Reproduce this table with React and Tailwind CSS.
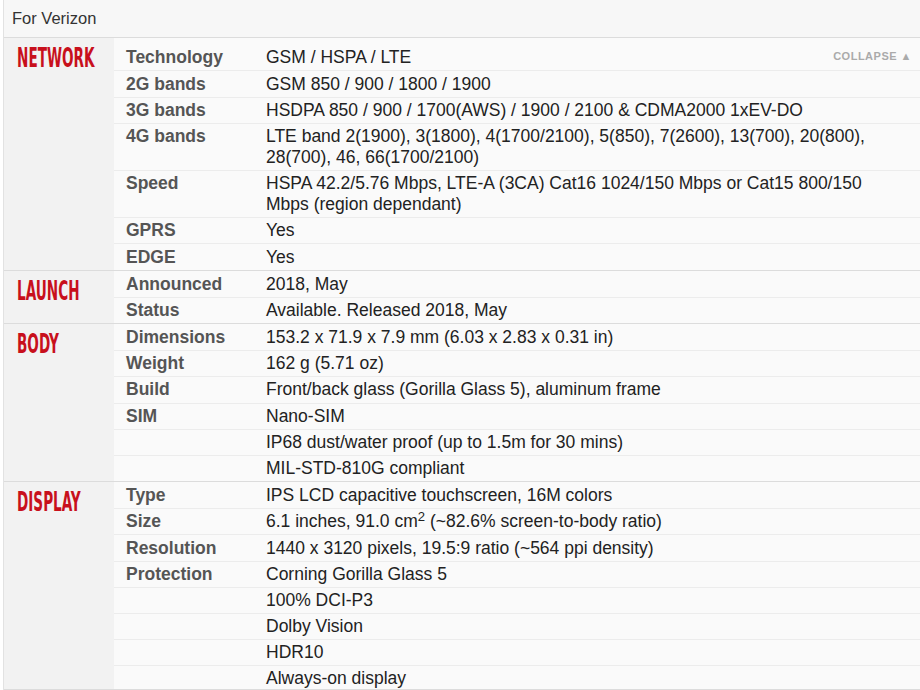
const sections = [
  {
    title: "NETWORK",
    rows: [
      { label: "Technology", value: "GSM / HSPA / LTE", collapse: true },
      { label: "2G bands", value: "GSM 850 / 900 / 1800 / 1900" },
      { label: "3G bands", value: "HSDPA 850 / 900 / 1700(AWS) / 1900 / 2100 & CDMA2000 1xEV-DO" },
      {
        label: "4G bands",
        value:
          "LTE band 2(1900), 3(1800), 4(1700/2100), 5(850), 7(2600), 13(700), 20(800), 28(700), 46, 66(1700/2100)",
      },
      {
        label: "Speed",
        value: "HSPA 42.2/5.76 Mbps, LTE-A (3CA) Cat16 1024/150 Mbps or Cat15 800/150 Mbps (region dependant)",
      },
      { label: "GPRS", value: "Yes" },
      { label: "EDGE", value: "Yes" },
    ],
  },
  {
    title: "LAUNCH",
    rows: [
      { label: "Announced", value: "2018, May" },
      { label: "Status", value: "Available. Released 2018, May" },
    ],
  },
  {
    title: "BODY",
    rows: [
      { label: "Dimensions", value: "153.2 x 71.9 x 7.9 mm (6.03 x 2.83 x 0.31 in)" },
      { label: "Weight", value: "162 g (5.71 oz)" },
      { label: "Build", value: "Front/back glass (Gorilla Glass 5), aluminum frame" },
      { label: "SIM", value: "Nano-SIM" },
      { label: "", value: "IP68 dust/water proof (up to 1.5m for 30 mins)" },
      { label: "", value: "MIL-STD-810G compliant" },
    ],
  },
  {
    title: "DISPLAY",
    rows: [
      { label: "Type", value: "IPS LCD capacitive touchscreen, 16M colors" },
      {
        label: "Size",
        value: (
          <>
            6.1 inches, 91.0 cm<sup>2</sup> (~82.6% screen-to-body ratio)
          </>
        ),
      },
      { label: "Resolution", value: "1440 x 3120 pixels, 19.5:9 ratio (~564 ppi density)" },
      { label: "Protection", value: "Corning Gorilla Glass 5" },
      { label: "", value: "100% DCI-P3" },
      { label: "", value: "Dolby Vision" },
      { label: "", value: "HDR10" },
      { label: "", value: "Always-on display", tight: true },
    ],
  },
];

function SpecRow({ row, first, last }) {
  let pad = "py-[2.1px]";
  if (row.collapse) pad = "pt-[9.4px] pb-[2.1px]";
  else if (first) pad = "pt-[3.1px] pb-[2.1px]";
  else if (row.tight) pad = "pt-[1.4px] pb-0";

  return (
    <div
      className={`relative flex text-[17.5px] leading-[21px] ${pad} ${
        last ? "" : "border-b border-[#ececec]"
      }`}
    >
      <div className="w-[152px] shrink-0 pl-[12px] font-bold text-[#555]">{row.label}</div>
      <div className="flex-1 pr-[36px] text-[#222]">{row.value}</div>
      {row.collapse && (
        <span className="absolute right-[8px] top-[8px] text-[11px] font-bold tracking-[0.5px] text-[#aaa]">
          COLLAPSE ▲
        </span>
      )}
    </div>
  );
}

function SpecSection({ section }) {
  return (
    <div className="flex border-b border-[#dcdcdc]">
      <div className="w-[110px] shrink-0 bg-[#f2f2f2] pl-[13px] pt-[7px]">
        <span
          className="inline-block origin-left scale-x-[0.56] text-[27px] leading-[26px] font-bold text-[#c8101c]"
          style={{ fontFamily: '"DejaVu Sans Condensed", "DejaVu Sans", sans-serif' }}
        >
          {section.title}
        </span>
      </div>
      <div className="flex-1 bg-[#fafafa]">
        {section.rows.map((row, i) => (
          <SpecRow key={i} row={row} first={i === 0} last={i === section.rows.length - 1} />
        ))}
      </div>
    </div>
  );
}

export default function App() {
  return (
    <div
      className="w-[920px] h-[690px] overflow-hidden bg-white pl-[3px]"
      style={{ fontFamily: '"Liberation Sans", Arial, sans-serif' }}
    >
      <div className="border-l border-[#e2e2e2]">
        <div className="h-[38px] bg-[#f7f7f7] border-b border-[#dcdcdc] pl-[8px] pt-[8px] text-[16.5px] leading-[20px] text-[#333]">
          For Verizon
        </div>
        {sections.map((s) => (
          <SpecSection key={s.title} section={s} />
        ))}
      </div>
    </div>
  );
}
